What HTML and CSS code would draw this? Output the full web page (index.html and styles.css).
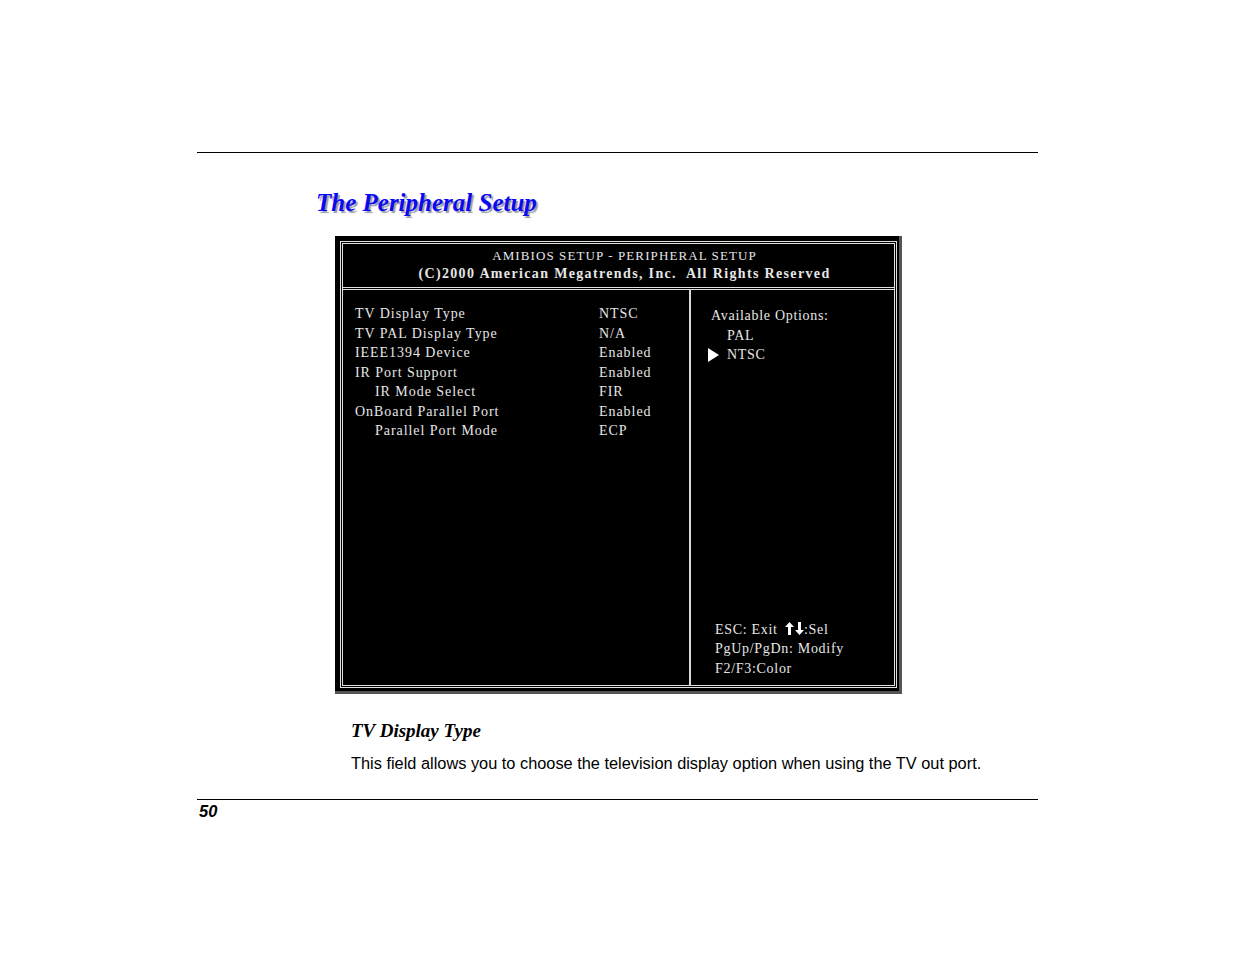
FILE: index.html
```html
<!DOCTYPE html>
<html>
<head>
<meta charset="utf-8">
<link rel="stylesheet" href="styles.css">
</head>
<body>
<div class="page">
  <div class="rule"></div>
  <h1 class="title">The Peripheral Setup</h1>
  <div class="bios">
    <div class="frame">
      <div class="head">
        <div class="head-1">AMIBIOS SETUP - PERIPHERAL SETUP</div>
        <div class="head-2">(C)2000 American Megatrends, Inc.&nbsp; All Rights Reserved</div>
      </div>
      <div class="body">
        <div class="items">
          <div class="row"><span class="label">TV Display Type</span><span class="value">NTSC</span></div>
          <div class="row"><span class="label">TV PAL Display Type</span><span class="value">N/A</span></div>
          <div class="row"><span class="label">IEEE1394 Device</span><span class="value">Enabled</span></div>
          <div class="row"><span class="label">IR Port Support</span><span class="value">Enabled</span></div>
          <div class="row"><span class="label sub">IR Mode Select</span><span class="value">FIR</span></div>
          <div class="row"><span class="label">OnBoard Parallel Port</span><span class="value">Enabled</span></div>
          <div class="row"><span class="label sub">Parallel Port Mode</span><span class="value">ECP</span></div>
        </div>
        <div class="side">
          <div class="options">
            <div class="opt-title">Available Options:</div>
            <div class="opt">PAL</div>
            <div class="opt sel"><svg class="arrow" width="11" height="14" viewBox="0 0 11 14"><polygon points="0,0 11,7 0,14" fill="#fff"/></svg>NTSC</div>
          </div>
          <div class="keys">
            <div class="key">ESC: Exit <span class="updown"><svg width="9" height="13" viewBox="0 0 9 13"><polygon points="4.5,0 9,5 6,5 6,13 3,13 3,5 0,5" fill="#fff"/></svg><svg width="9" height="13" viewBox="0 0 9 13"><polygon points="3,0 6,0 6,8 9,8 4.5,13 0,8 3,8" fill="#fff"/></svg></span>:Sel</div>
            <div class="key">PgUp/PgDn: Modify</div>
            <div class="key">F2/F3:Color</div>
          </div>
        </div>
      </div>
    </div>
  </div>
  <h2 class="field">TV Display Type</h2>
  <p class="desc">This field allows you to choose the television display option when using the TV out port.</p>
  <div class="rule bottom"></div>
  <div class="pagenum">50</div>
</div>
</body>
</html>
```
FILE: styles.css
```css
html, body {
  margin: 0;
  padding: 0;
  background: #fff;
}
.page {
  width: 841px;
  margin-left: 197px;
  padding-top: 152px;
}
.rule {
  border-top: 1px solid #000;
}
.title {
  margin: 34px 0 0 119px;
  font-family: "Liberation Serif", serif;
  font-style: italic;
  font-weight: bold;
  font-size: 25px;
  line-height: 32px;
  color: #0a0af0;
  text-shadow: 2px 2px 1px #9a9ab0;
}
.bios {
  margin: 17px 0 0 138px;
  width: 567px;
  height: 458px;
  box-sizing: border-box;
  background: #000;
  padding: 5px 2px 3px 5px;
  border-right: 3px solid #555;
  border-bottom: 3px solid #555;
}
.frame {
  height: 100%;
  box-sizing: border-box;
  border: 3px double #e0e0e0;
  display: flex;
  flex-direction: column;
  font-family: "Liberation Serif", serif;
  color: #e6e6e6;
}
.head {
  height: 46px;
  box-sizing: border-box;
  border-bottom: 3px double #e0e0e0;
  text-align: center;
  padding: 3px 0 0 12px;
}
.head-1 {
  font-size: 13px;
  line-height: 17px;
  letter-spacing: 1.1px;
}
.head-2 {
  font-size: 14px;
  line-height: 19px;
  font-weight: bold;
  letter-spacing: 1.35px;
}
.body {
  flex: 1;
  display: flex;
}
.items {
  width: 348px;
  box-sizing: border-box;
  border-right: 2px solid #d8d8d8;
  padding: 14px 0 0 12px;
}
.row {
  display: flex;
  font-size: 14px;
  line-height: 19.5px;
  letter-spacing: 0.95px;
}
.label {
  width: 244px;
}
.label.sub {
  padding-left: 20px;
  width: 224px;
}
.side {
  flex: 1;
  display: flex;
  flex-direction: column;
  justify-content: space-between;
  padding: 16px 0 7px 0;
  font-size: 14px;
  line-height: 19.5px;
  letter-spacing: 0.7px;
}
.options {
  padding-left: 20px;
}
.opt {
  padding-left: 16px;
  display: flex;
  align-items: center;
}
.opt.sel {
  padding-left: 0;
  margin-left: -3px;
}
.arrow {
  margin-right: 8px;
}
.keys {
  padding-left: 24px;
}
.updown {
  display: inline-flex;
  gap: 1px;
  vertical-align: -1px;
  margin-left: 3px;
}
.field {
  margin: 26px 0 0 154px;
  font-family: "Liberation Serif", serif;
  font-style: italic;
  font-weight: bold;
  font-size: 19px;
  line-height: 22px;
  color: #000;
}
.desc {
  margin: 12px 0 0 154px;
  font-family: "Liberation Sans", Arial, sans-serif;
  font-size: 16.35px;
  line-height: 18px;
  color: #000;
}
.rule.bottom {
  margin-top: 27px;
}
.pagenum {
  margin: 2px 0 0 2px;
  font-family: "Liberation Sans", Arial, sans-serif;
  font-style: italic;
  font-weight: bold;
  font-size: 16.5px;
  line-height: 19px;
}
```
